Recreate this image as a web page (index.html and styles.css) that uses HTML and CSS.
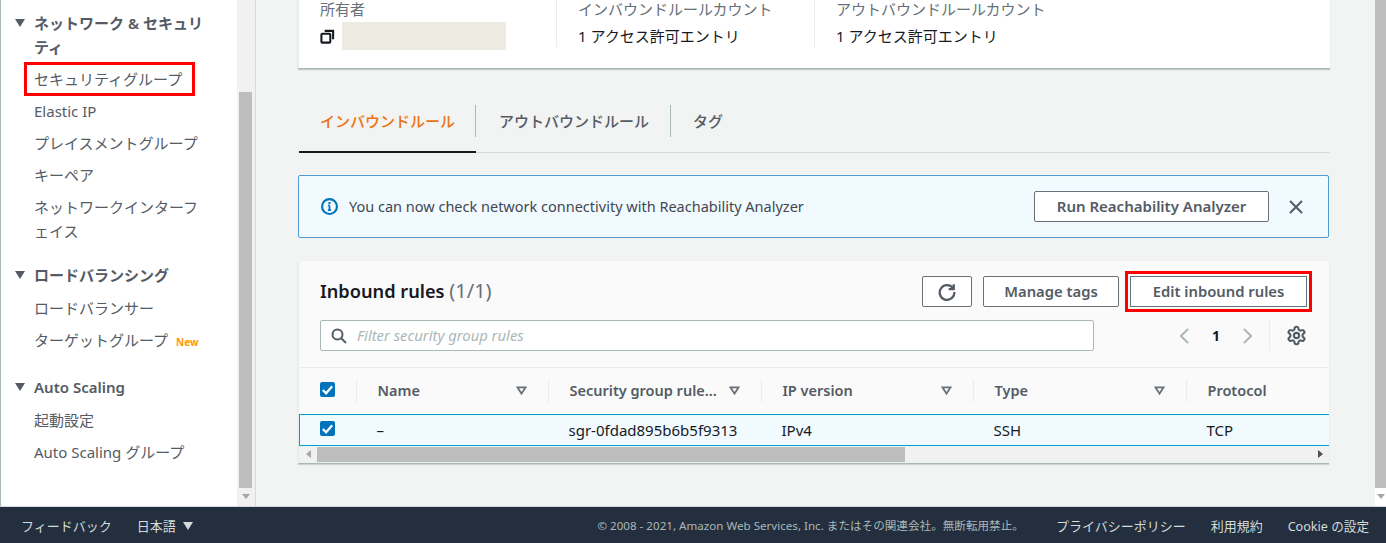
FILE: index.html
```html
<!DOCTYPE html>
<html lang="ja">
<head>
    <meta charset="UTF-8">
    <meta name="viewport" content="width=device-width, initial-scale=1.0">
    <title>Security group</title>
    <link rel="stylesheet" href="styles.css">
</head>
<body>
    <div class="app">
        <div class="workspace">
            <nav class="nav">
                <div class="nav-section">
                    <div class="nav-heading"><span class="caret"></span>ネットワーク &amp; セキュリティ</div>
                    <a class="nav-item nav-item-marked">セキュリティグループ</a>
                    <a class="nav-item">Elastic IP</a>
                    <a class="nav-item">プレイスメントグループ</a>
                    <a class="nav-item">キーペア</a>
                    <a class="nav-item">ネットワークインターフェイス</a>
                </div>
                <div class="nav-section">
                    <div class="nav-heading"><span class="caret"></span>ロードバランシング</div>
                    <a class="nav-item">ロードバランサー</a>
                    <a class="nav-item nav-item-last">ターゲットグループ<span class="new-tag">New</span></a>
                </div>
                <div class="nav-section">
                    <div class="nav-heading"><span class="caret"></span>Auto Scaling</div>
                    <a class="nav-item">起動設定</a>
                    <a class="nav-item">Auto Scaling グループ</a>
                </div>
            </nav>
            <div class="scrollbar nav-scrollbar">
                <div class="scrollbar-thumb"></div>
                <div class="scrollbar-arrow"></div>
            </div>

            <main class="main">
                <section class="summary">
                    <div class="summary-col summary-owner">
                        <div class="summary-label">所有者</div>
                        <div class="summary-value">
                            <svg class="copy-icon" viewBox="0 0 16 16" width="15" height="15" fill="none" stroke="#16191f" stroke-width="2.2">
                                <rect x="1.5" y="5" width="9.5" height="9.5" rx="1"/>
                                <path d="M5 2h9v9"/>
                            </svg>
                            <span class="redacted"></span>
                        </div>
                    </div>
                    <div class="summary-col summary-inbound">
                        <div class="summary-label">インバウンドルールカウント</div>
                        <div class="summary-value">1 アクセス許可エントリ</div>
                    </div>
                    <div class="summary-col">
                        <div class="summary-label">アウトバウンドルールカウント</div>
                        <div class="summary-value">1 アクセス許可エントリ</div>
                    </div>
                </section>

                <div class="tabs">
                    <div class="tab tab-active"><span>インバウンドルール</span></div>
                    <div class="tab"><span>アウトバウンドルール</span></div>
                    <div class="tab tab-end"><span>タグ</span></div>
                </div>

                <div class="alert">
                    <svg viewBox="0 0 16 16" width="17" height="17" fill="none">
                        <circle cx="8" cy="8" r="7" stroke="#0073bb" stroke-width="2"/>
                        <path d="M8 7v4.5M6.5 11.5h3M6.5 7H8" stroke="#0073bb" stroke-width="1.6"/>
                        <rect x="7" y="3.8" width="2" height="1.8" fill="#0073bb"/>
                    </svg>
                    <span class="alert-text">You can now check network connectivity with Reachability Analyzer</span>
                    <button class="btn btn-run">Run Reachability Analyzer</button>
                    <svg class="alert-close" viewBox="0 0 16 16" width="16" height="16" fill="none" stroke="#545b64" stroke-width="2">
                        <path d="M2 2l12 12M14 2L2 14"/>
                    </svg>
                </div>

                <section class="rules">
                    <div class="rules-toolbar">
                        <h2 class="rules-title">Inbound rules <span class="rules-count">(1/1)</span></h2>
                        <button class="btn btn-icon">
                            <svg viewBox="0 0 16 16" width="18" height="18" fill="none" stroke="#545b64" stroke-width="2">
                                <path d="M13.5 5A6.5 6.5 0 1 0 14.5 8"/>
                                <path d="M14 1v4.5H9.5"/>
                            </svg>
                        </button>
                        <button class="btn btn-tags">Manage tags</button>
                        <button class="btn btn-edit">Edit inbound rules</button>
                    </div>
                    <div class="rules-filter">
                        <div class="filter-input">
                            <svg viewBox="0 0 16 16" width="16" height="16" fill="none" stroke="#545b64" stroke-width="2">
                                <circle cx="6.5" cy="6.5" r="5"/>
                                <path d="M10.5 10.5L15 15"/>
                            </svg>
                            <span>Filter security group rules</span>
                        </div>
                        <div class="pager">
                            <svg viewBox="0 0 12 18" width="12" height="18" fill="none" stroke="#aab7b8" stroke-width="2"><path d="M10 2L3 9l7 7"/></svg>
                            <span class="pager-num">1</span>
                            <svg viewBox="0 0 12 18" width="12" height="18" fill="none" stroke="#aab7b8" stroke-width="2"><path d="M2 2l7 7-7 7"/></svg>
                        </div>
                        <div class="pager-settings">
                            <svg viewBox="0 0 24 24" width="21" height="21" fill="none" stroke="#545b64" stroke-width="2.4">
                                <path d="M12.22 2h-.44a2 2 0 0 0-2 2v.18a2 2 0 0 1-1 1.73l-.43.25a2 2 0 0 1-2 0l-.15-.08a2 2 0 0 0-2.73.73l-.22.38a2 2 0 0 0 .73 2.73l.15.1a2 2 0 0 1 1 1.72v.51a2 2 0 0 1-1 1.74l-.15.09a2 2 0 0 0-.73 2.73l.22.38a2 2 0 0 0 2.73.73l.15-.08a2 2 0 0 1 2 0l.43.25a2 2 0 0 1 1 1.73V20a2 2 0 0 0 2 2h.44a2 2 0 0 0 2-2v-.18a2 2 0 0 1 1-1.73l.43-.25a2 2 0 0 1 2 0l.15.08a2 2 0 0 0 2.73-.73l.22-.39a2 2 0 0 0-.73-2.73l-.15-.08a2 2 0 0 1-1-1.74v-.5a2 2 0 0 1 1-1.74l.15-.09a2 2 0 0 0 .73-2.73l-.22-.38a2 2 0 0 0-2.73-.73l-.15.08a2 2 0 0 1-2 0l-.43-.25a2 2 0 0 1-1-1.73V4a2 2 0 0 0-2-2z"/>
                                <circle cx="12" cy="12" r="3"/>
                            </svg>
                        </div>
                    </div>
                    <table class="rules-table">
                        <thead>
                            <tr>
                                <th class="col-check"><span class="th-inner"><span class="checkbox"><svg viewBox="0 0 16 16" width="16" height="16" fill="none" stroke="#fff" stroke-width="2.4"><path d="M3 8.5l3.5 3.5L13 4.5"/></svg></span></span></th>
                                <th class="col-name"><span class="th-inner">Name<svg class="sort" viewBox="0 0 12 10" width="11" height="9" fill="none" stroke="#687078" stroke-width="2"><path d="M1.5 1.5h9L6 8.5z"/></svg></span></th>
                                <th class="col-rule"><span class="th-inner">Security group rule...<svg class="sort" viewBox="0 0 12 10" width="11" height="9" fill="none" stroke="#687078" stroke-width="2"><path d="M1.5 1.5h9L6 8.5z"/></svg></span></th>
                                <th class="col-ip"><span class="th-inner">IP version<svg class="sort" viewBox="0 0 12 10" width="11" height="9" fill="none" stroke="#687078" stroke-width="2"><path d="M1.5 1.5h9L6 8.5z"/></svg></span></th>
                                <th class="col-type"><span class="th-inner">Type<svg class="sort" viewBox="0 0 12 10" width="11" height="9" fill="none" stroke="#687078" stroke-width="2"><path d="M1.5 1.5h9L6 8.5z"/></svg></span></th>
                                <th><span class="th-inner th-last">Protocol</span></th>
                            </tr>
                        </thead>
                        <tbody>
                            <tr class="row-selected">
                                <td><span class="checkbox"><svg viewBox="0 0 16 16" width="16" height="16" fill="none" stroke="#fff" stroke-width="2.4"><path d="M3 8.5l3.5 3.5L13 4.5"/></svg></span></td>
                                <td>–</td>
                                <td>sgr-0fdad895b6b5f9313</td>
                                <td>IPv4</td>
                                <td>SSH</td>
                                <td>TCP</td>
                            </tr>
                        </tbody>
                    </table>
                    <div class="h-scroll">
                        <span class="h-arrow h-arrow-left"></span>
                        <div class="h-track"><div class="h-thumb"></div></div>
                        <span class="h-arrow h-arrow-right"></span>
                    </div>
                </section>
            </main>
            <div class="scrollbar main-scrollbar">
                <div class="scrollbar-thumb"></div>
                <div class="scrollbar-arrow"></div>
            </div>
        </div>

        <footer class="footer">
            <span class="footer-feedback">フィードバック</span>
            <span class="footer-lang">日本語<span class="footer-caret"></span></span>
            <span class="footer-copy">© 2008 - 2021, Amazon Web Services, Inc. またはその関連会社。無断転用禁止。</span>
            <span class="footer-link">プライバシーポリシー</span>
            <span class="footer-link">利用規約</span>
            <span class="footer-link footer-cookie">Cookie の設定</span>
        </footer>
    </div>
</body>
</html>
```

FILE: styles.css
```css
* {
    box-sizing: border-box;
}

body {
    margin: 0;
    font-family: "Noto Sans", "Noto Sans CJK JP", sans-serif;
    color: #16191f;
    background: #f2f3f3;
}

.app {
    height: 543px;
    display: flex;
    flex-direction: column;
    overflow: hidden;
}

.workspace {
    flex: 1;
    min-height: 0;
    display: flex;
}

/* side navigation */
.nav {
    width: 237px;
    flex-shrink: 0;
    padding: 11px 31px 0 33px;
    background: #fff;
    border-left: 1px solid #aab7b8;
    font-size: 15px;
    line-height: 24px;
    color: #545b64;
}

.nav-section {
    margin-bottom: 16px;
}

.nav-heading {
    position: relative;
    margin-bottom: 5px;
    font-weight: 600;
}

.caret {
    position: absolute;
    left: -19px;
    top: 8px;
    border-left: 5px solid transparent;
    border-right: 5px solid transparent;
    border-top: 8px solid #545b64;
}

.nav-item {
    display: block;
    padding: 4px 0;
}

.nav-item-marked {
    outline: 3px solid #f00;
    margin: 6px 0 2px -7px;
    padding: 2px 0 2px 7px;
    width: 165px;
    white-space: nowrap;
}

.nav-item-last {
    padding-bottom: 5px;
}

.new-tag {
    margin-left: 8px;
    font-size: 10px;
    font-weight: 700;
    color: #ff9900;
}

/* scrollbars */
.scrollbar {
    flex-shrink: 0;
    background: #f1f1f1;
    display: flex;
    flex-direction: column;
    align-items: center;
}

.nav-scrollbar {
    width: 19px;
    padding: 92px 3px 0 2px;
    border-right: 1px solid #d5dbdb;
}

.main-scrollbar {
    width: 11px;
    background: #fff;
}

.scrollbar-thumb {
    width: 100%;
    height: 396px;
    background: #bdbdbd;
}

.main-scrollbar .scrollbar-thumb {
    height: 488px;
}

.scrollbar-arrow {
    margin-top: 6px;
    border-left: 4px solid transparent;
    border-right: 4px solid transparent;
    border-top: 5px solid #a6a6a6;
}

/* main column */
.main {
    flex: 1;
    min-width: 0;
    padding: 0 45px 0 42px;
}

.summary {
    height: 69px;
    display: flex;
    background: #fff;
    border-bottom: 1px solid #aab7b8;
    box-shadow: 0 1px 1px rgba(0, 28, 36, 0.2);
    border-left: 1px solid #eaeded;
    font-size: 15px;
    line-height: 24px;
}

.summary-col {
    height: 47px;
    padding: 0 21px;
    border-right: 1px solid #eaeded;
}

.summary-col:last-child {
    border-right: none;
}

.summary-owner,
.summary-inbound {
    width: 258px;
}

.summary-label {
    margin-top: -3px;
    height: 24px;
    color: #687078;
}

.summary-value {
    height: 28px;
    display: flex;
    align-items: center;
    margin-top: 1px;
}

.copy-icon {
    margin-right: 7px;
}

.redacted {
    width: 164px;
    height: 28px;
    background: #edebe1;
}

/* tabs */
.tabs {
    display: flex;
    margin: 36px 0 22px 1px;
    height: 48px;
    border-bottom: 1px solid #d5dbdb;
}

.tab {
    height: 48px;
    font-size: 15px;
    font-weight: 500;
    color: #545b64;
}

.tab span {
    display: block;
    padding: 0 21px 0 23px;
    line-height: 32px;
    border-right: 1px solid #aab7b8;
}

.tab-active {
    border-bottom: 2px solid #16191f;
    color: #ec7211;
}

.tab-active span {
    padding: 0 20px 0 21px;
}

.tab-end span {
    padding-left: 22px;
    border-right: none;
}

/* info alert */
.alert {
    height: 63px;
    display: flex;
    align-items: center;
    margin-right: 1px;
    padding: 0 24px 0 22px;
    background: #f1faff;
    border: 1px solid #4f9bcf;
    border-radius: 2px;
}

.alert-text {
    flex: 1;
    margin-left: 11px;
    padding-bottom: 2px;
    font-size: 14.5px;
    color: #414750;
}

.alert-close {
    margin-left: 19px;
}

/* buttons */
.btn {
    height: 31px;
    padding: 0 0 2px;
    font-family: inherit;
    font-size: 14.8px;
    font-weight: 600;
    color: #545b64;
    background: #fff;
    border: 1px solid #687078;
    border-radius: 2px;
}

.btn-run {
    width: 235px;
    font-size: 15px;
}

.btn-icon {
    width: 50px;
    padding: 0;
    display: flex;
    align-items: center;
    justify-content: center;
}

.btn-tags {
    width: 136px;
    margin-left: 11px;
}

.btn-edit {
    width: 177px;
    margin-left: 11px;
    border-radius: 0;
    outline: 3px solid #f00;
    outline-offset: 2px;
}

/* rules card */
.rules {
    margin-top: 23px;
    margin-right: 1px;
    background: #fafafa;
    border-left: 1px solid #eaeded;
    border-bottom: 1px solid #aab7b8;
    box-shadow: 0 1px 1px rgba(0, 28, 36, 0.15);
}

.rules-toolbar {
    display: flex;
    align-items: center;
    padding: 15px 22px 0 21px;
}

.rules-title {
    flex: 1;
    margin: 0 0 2px;
    font-size: 18.2px;
    font-weight: 600;
    color: #16191f;
}

.rules-count {
    font-size: 20px;
    font-weight: 400;
    color: #687078;
}

.rules-filter {
    display: flex;
    align-items: center;
    margin-top: 13px;
    padding: 0 21px 16px 21px;
    border-bottom: 1px solid #eaeded;
}

.filter-input {
    width: 774px;
    height: 31px;
    display: flex;
    align-items: center;
    gap: 10px;
    padding-left: 10px;
    background: #fff;
    border: 1px solid #aab7b8;
    border-radius: 2px;
    font-size: 14.8px;
    font-style: italic;
    color: #aab7b8;
}

.filter-input span {
    margin-bottom: 2px;
}

.pager {
    margin-left: 84px;
    display: flex;
    align-items: center;
    gap: 22px;
}

.pager-num {
    font-size: 14px;
    font-weight: 700;
    color: #16191f;
}

.pager-settings {
    height: 31px;
    margin-left: 15px;
    padding-left: 16px;
    display: flex;
    align-items: center;
    border-left: 1px solid #eaeded;
}

.rules-table {
    width: 100%;
    table-layout: fixed;
    border-collapse: collapse;
    font-size: 15px;
}

.rules-table th {
    height: 46px;
    padding: 0;
    font-size: 14.5px;
    font-weight: 600;
    text-align: left;
    color: #545b64;
    background: #fafafa;
}

.col-check {
    width: 57px;
}

.col-name {
    width: 192px;
}

.col-rule,
.col-type {
    width: 213px;
}

.col-ip {
    width: 212px;
}

.th-inner {
    height: 23px;
    display: flex;
    align-items: flex-start;
    justify-content: space-between;
    padding: 0 21px;
    line-height: 23px;
    border-right: 1px solid #eaeded;
}

.col-check .th-inner {
    padding: 0 0 0 20px;
}

.th-last {
    border-right: none;
}

.sort {
    align-self: center;
}

.checkbox {
    width: 15px;
    height: 15px;
    display: block;
    align-self: center;
    margin-bottom: 2px;
    background: #0073bb;
    border-radius: 2px;
    line-height: 0;
}

.checkbox svg {
    width: 15px;
    height: 15px;
}

.row-selected td {
    height: 31px;
    padding: 0 0 0 20px;
    background: #f1faff;
    border-top: 1px solid #00a1c9;
    border-bottom: 1px solid #00a1c9;
    color: #16191f;
}

.row-selected td:first-child {
    border-left: 1px solid #00a1c9;
}

.h-scroll {
    height: 17px;
    display: flex;
    align-items: center;
    background: #f1f1f1;
}

.h-track {
    flex: 1;
    height: 15px;
}

.h-thumb {
    width: 588px;
    height: 15px;
    background: #bdbdbd;
}

.h-arrow {
    width: 18px;
    display: flex;
    justify-content: center;
}

.h-arrow-left::before,
.h-arrow-right::before {
    content: "";
    border-top: 4px solid transparent;
    border-bottom: 4px solid transparent;
}

.h-arrow-left::before {
    border-right: 5px solid #a6a6a6;
}

.h-arrow-right::before {
    border-left: 5px solid #505050;
}

/* footer */
.footer {
    height: 37px;
    flex-shrink: 0;
    display: flex;
    align-items: center;
    padding: 0 17px 0 21px;
    background: #232f3e;
    border-top: 1px solid #d5dbdb;
    font-size: 13px;
    color: #d5dbdb;
}

.footer-lang {
    margin-left: 25px;
    display: flex;
    align-items: center;
}

.footer-caret {
    margin-left: 7px;
    margin-top: 1px;
    border-left: 5px solid transparent;
    border-right: 5px solid transparent;
    border-top: 8px solid #d5dbdb;
}

.footer-copy {
    margin-left: auto;
    margin-right: 7px;
    font-size: 11.6px;
    color: #aab7b8;
}

.footer-link {
    margin-left: 25px;
}

.footer-cookie {
    font-size: 12.6px;
}
```
